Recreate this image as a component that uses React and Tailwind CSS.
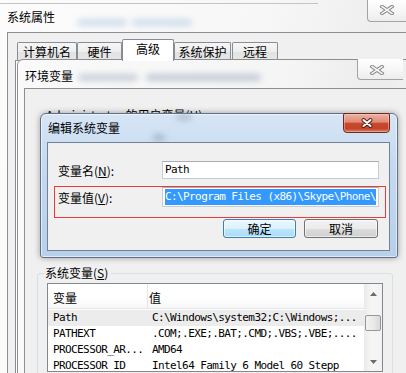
import React from "react";

const CJK = "font-['Noto_Sans_CJK_SC',sans-serif]";
const MONO =
  "font-['DejaVu_Sans_Mono','Liberation_Mono','Noto_Sans_CJK_SC',monospace] text-[11px] tracking-[-0.6px]";

function XIcon({ red }) {
  if (red) {
    return (
      <svg width="14" height="10" viewBox="0 0 14 10">
        <path d="M3.5 2 L10.5 8 M10.5 2 L3.5 8" stroke="#4a1a12" strokeWidth="3.8" strokeLinecap="round" fill="none" />
        <path d="M3.5 2 L10.5 8 M10.5 2 L3.5 8" stroke="#ffffff" strokeWidth="2.1" strokeLinecap="round" fill="none" />
      </svg>
    );
  }
  return (
    <svg width="16" height="10" viewBox="0 0 16 10">
      <path d="M3 1.5 L13 8.5 M13 1.5 L3 8.5" stroke="#808080" strokeWidth="3.4" strokeLinecap="square" fill="none" />
      <path d="M3 1.5 L13 8.5 M13 1.5 L3 8.5" stroke="#f5f5f5" strokeWidth="1.6" strokeLinecap="square" fill="none" />
    </svg>
  );
}

function InactiveClose({ className }) {
  return (
    <div
      className={`absolute flex items-start pl-[11px] pt-[6px] border-l border-b border-[#a3a3a3] rounded-bl-[4px] bg-[linear-gradient(180deg,#ffffff_0%,#f7f7f7_50%,#ededed_100%)] ${className}`}
    >
      <XIcon />
    </div>
  );
}

const tabs = [
  { label: "计算机名", cls: "w-[60px]" },
  { label: "硬件", cls: "w-[45px]" },
  { label: "高级", cls: "w-[52px]", sel: true },
  { label: "系统保护", cls: "w-[57px]" },
  { label: "远程", cls: "w-[46px] ml-[1px]" },
];

const rows = [
  ["Path", "C:\\Windows\\system32;C:\\Windows;...", true],
  ["PATHEXT", ".COM;.EXE;.BAT;.CMD;.VBS;.VBE;....", false],
  ["PROCESSOR_AR...", "AMD64", false],
  ["PROCESSOR_ID", "Intel64 Family 6 Model 60 Stepp", false],
];

export default function App() {
  return (
    <div
      className={`relative w-[406px] h-[373px] overflow-hidden bg-white text-[12px] leading-[16px] text-black ${CJK}`}
    >
      {/* 系统属性 window */}
      <div className="absolute left-0 top-0 w-[420px] h-[400px] flex flex-col bg-[linear-gradient(100deg,#fcfcfc_0%,#f7f7f7_55%,#eeeeee_78%,#f6f6f6_100%)]">
        <div className="relative h-[32px] shrink-0 flex items-center pl-[7px] pt-[2px]">
          <div className="absolute left-0 top-[3px] w-[318px] h-px bg-[#c4c4c4]" />
          <div className="absolute left-[77px] top-[19px] w-[50px] h-[7px] rounded-full bg-[#b3cbe4] blur-[3px] opacity-60" />
          <div className="absolute left-[132px] top-[19px] w-[60px] h-[7px] rounded-full bg-[#b3cbe4] blur-[3px] opacity-60" />
          <span className="relative">系统属性</span>
          <InactiveClose className="left-[367px] top-[-1px] w-[46px] h-[23px]" />
        </div>
        <div className="ml-[7px] flex-1 flex flex-col border-t border-l border-[#8e8f8f] bg-[#f0f0f0]">
          <div className="h-[27px] shrink-0 flex items-end pl-[9px]">
            {tabs.map((t) =>
              t.sel ? (
                <div
                  key={t.label}
                  className={`relative z-10 -mb-px h-[22px] flex justify-center pt-[1px] border-t border-l border-r border-[#898c95] rounded-t-[2px] bg-white ${t.cls}`}
                >
                  {t.label}
                </div>
              ) : (
                <div
                  key={t.label}
                  className={`h-[18px] flex justify-center items-center pt-[1px] border-t border-l border-r border-[#898c95] rounded-t-[2px] bg-[linear-gradient(180deg,#f6f6f6_0%,#eeeeee_50%,#e2e2e2_51%,#e6e6e6_100%)] ${t.cls}`}
                >
                  {t.label}
                </div>
              )
            )}
          </div>
          <div className="ml-[7px] flex-1 border-t border-l border-[#898c95] bg-white" />
        </div>
      </div>

      {/* 环境变量 window */}
      <div className="absolute left-[17px] top-[59px] w-[396px] h-[330px] flex flex-col rounded-tl-[6px] border border-[#8d8d8d] bg-[linear-gradient(100deg,#fafafa_0%,#f5f5f5_60%,#ececec_80%,#f6f6f6_100%)]">
        <div className="relative h-[28px] shrink-0 flex items-center pl-[7px] pt-[3px]">
          <div className="absolute left-[60px] top-[14px] w-[60px] h-[7px] rounded-full bg-[#a9b6c6] blur-[3px] opacity-60" />
          <div className="absolute left-[128px] top-[14px] w-[115px] h-[7px] rounded-full bg-[#a0aec0] blur-[3px] opacity-60" />
          <span className="relative">环境变量</span>
          <InactiveClose className="left-[339px] top-[-1px] w-[46px] h-[21px]" />
        </div>
        <div className="ml-[6px] flex-1 flex flex-col border-t border-l border-[#8e8f8f] bg-[#f0f0f0] pt-[18px]">
          <div className="pl-[21px]">
            Administrator 的用户变量(<span className="underline">U</span>)
          </div>
          <div className="mt-[142px] ml-[12px] w-[356px] flex flex-col">
            <div className="relative z-10 h-[16px] flex items-center pl-[7px]">
              <span className="bg-[#f0f0f0] pl-[1px] pr-[3px]">
                系统变量(<span className="underline">S</span>)
              </span>
            </div>
            <div className="-mt-[8px] h-[120px] rounded-[3px] border border-[#d5dfe5] pt-[9px] pl-[9px]">
              <div className="w-[336px] h-[89px] flex border border-[#828790] bg-white overflow-hidden">
                <div className="flex-1 flex flex-col">
                  <div className="h-[25px] shrink-0 flex border-b border-[#e5e5e5] bg-[linear-gradient(180deg,#ffffff_0%,#ffffff_60%,#f6f7f9_100%)]">
                    <div className="w-[100px] border-r border-[#e5e5e5] pl-[5px] pt-[6px]">变量</div>
                    <div className="flex-1 pl-[1px] pt-[6px]">值</div>
                  </div>
                  <div className="mt-px flex flex-col">
                    {rows.map(([a, b, hi]) => (
                      <div
                        key={a}
                        className={`h-[16px] shrink-0 flex items-center ${MONO} ${hi ? "bg-[#ececec]" : ""}`}
                      >
                        <div className="w-[104px] pl-[5px] whitespace-pre">{a}</div>
                        <div className="whitespace-pre">{b}</div>
                      </div>
                    ))}
                  </div>
                </div>
                <div className="w-[18px] shrink-0 flex flex-col bg-[linear-gradient(90deg,#eaeaea_0%,#f6f6f6_40%,#f2f2f2_100%)]">
                  <div className="h-[17px] shrink-0 flex items-center justify-center pt-[2px]">
                    <svg width="7" height="4" viewBox="0 0 7 4">
                      <path d="M0 4 L3.5 0 L7 4 Z" fill="#6a6a6a" />
                    </svg>
                  </div>
                  <div className="flex-1 pt-[14px] px-px">
                    <div className="h-[16px] rounded-[2px] border border-[#979797] bg-[linear-gradient(90deg,#f2f2f2_0%,#ebebeb_50%,#d9d9d9_100%)]" />
                  </div>
                  <div className="h-[17px] shrink-0 flex items-center justify-center pb-[2px]">
                    <svg width="7" height="4" viewBox="0 0 7 4">
                      <path d="M0 0 L3.5 4 L7 0 Z" fill="#6a6a6a" />
                    </svg>
                  </div>
                </div>
              </div>
            </div>
          </div>
        </div>
      </div>

      {/* 编辑系统变量 dialog */}
      <div className="absolute left-[40px] top-[113px] w-[358px] h-[145px] flex flex-col rounded-t-[6px] rounded-b-[3px] border border-[#5d7088] bg-[linear-gradient(180deg,#d7e6f6_0%,#c5d9ef_35%,#b9d0ea_100%)] shadow-[0_0_6px_rgba(0,0,0,0.35),inset_0_0_0_1px_rgba(255,255,255,0.55)]">
        <div className="relative h-[28px] shrink-0 flex items-center pl-[7px]">
          <div className="absolute left-[135px] top-[1px] w-[16px] h-[5px] rounded-full bg-[#7d8ea1] blur-[3px] opacity-50" />
          <div className="absolute left-[112px] top-[21px] w-[12px] h-[5px] rounded-full bg-[#66768a] blur-[3px] opacity-50" />
          <span className="relative">编辑系统变量</span>
          <div className="absolute right-[7px] top-[-1px] w-[47px] h-[20px] flex items-center justify-center rounded-b-[4px] rounded-t-[2px] border border-[#6b2a1e] bg-[linear-gradient(180deg,#eeb2a4_0%,#df8a73_45%,#c8492e_52%,#c2442a_80%,#dc7f62_100%)] shadow-[inset_0_0_0_1px_rgba(255,210,200,0.45)]">
            <XIcon red />
          </div>
        </div>
        <div className="relative ml-[6px] mr-[7px] mb-[6px] flex-1 flex flex-col border border-[#6f8296] bg-[#f0f0f0] pt-[18px] pl-[10px]">
          <div className="h-[18px] flex items-center">
            <div className="w-[104px] pt-[1px]">
              变量名(<span className="underline">N</span>):
            </div>
            <div className={`w-[217px] h-[18px] flex items-center pl-[2px] border border-[#c8ccd3] border-t-[#abadb3] bg-white ${MONO}`}>
              Path
            </div>
          </div>
          <div className="mt-[8px] h-[20px] flex items-center">
            <div className="w-[104px] pt-[2px]">
              变量值(<span className="underline">V</span>):
            </div>
            <div className={`w-[217px] h-[20px] flex items-center pl-[2px] border border-[#c8ccd3] border-t-[#abadb3] bg-white ${MONO}`}>
              <span className="h-[16px] leading-[16px] bg-[#3399ff] text-white whitespace-pre">
                C:\Program Files (x86)\Skype\Phone\
              </span>
            </div>
          </div>
          <div className="mt-[12px] flex justify-end gap-[8px] pr-[11px]">
            <div className="w-[73px] h-[19px] flex items-center justify-center rounded-[3px] border border-[#3c7fb1] bg-[linear-gradient(180deg,#ecf7fd_0%,#dbf1fc_50%,#bee6fd_51%,#a9dbf6_100%)] shadow-[inset_0_0_0_1px_rgba(255,255,255,0.6)]">
              确定
            </div>
            <div className="w-[74px] h-[19px] flex items-center justify-center rounded-[3px] border border-[#707070] bg-[linear-gradient(180deg,#f2f2f2_0%,#ebebeb_50%,#dddddd_51%,#cfcfcf_100%)] shadow-[inset_0_0_0_1px_rgba(255,255,255,0.6)]">
              取消
            </div>
          </div>
          <div className="pointer-events-none absolute left-[6px] top-[43px] w-[332px] h-[32px] border border-[#ee3a3a]" />
        </div>
      </div>
    </div>
  );
}
